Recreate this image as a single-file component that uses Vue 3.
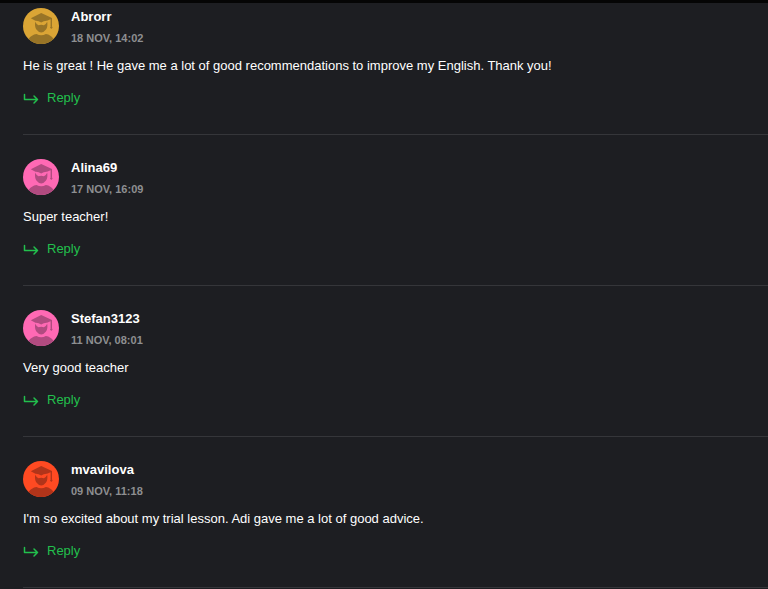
<script setup>
const reviews = [
  { name: 'Abrorr', date: '18 Nov, 14:02', tone: 'gold', text: 'He is great ! He gave me a lot of good recommendations to improve my English. Thank you!' },
  { name: 'Alina69', date: '17 Nov, 16:09', tone: 'pink', text: 'Super teacher!' },
  { name: 'Stefan3123', date: '11 Nov, 08:01', tone: 'pink', text: 'Very good teacher' },
  { name: 'mvavilova', date: '09 Nov, 11:18', tone: 'red', text: "I'm so excited about my trial lesson. Adi gave me a lot of good advice." },
]
</script>

<template>
  <main class="reviews">
    <article v-for="review in reviews" :key="review.name" class="review">
      <header class="author">
        <svg class="avatar" :class="review.tone" viewBox="0 0 36 36" aria-hidden="true">
          <circle class="disc" cx="18" cy="18" r="18" />
          <g class="figure">
            <path d="M18.200 5 29 10v8h-1.400v-6.800L24 12.800Q21 12.600 18.200 14.600 15.400 12.600 12.400 12.800L7.800 10.200Z" />
            <path d="M28.300 17.200 29.600 19.500 28.300 21 27 19.500Z" />
            <path d="M12.200 13.800Q13.500 16.600 15.500 17.200q2.700-.900 5.400 0 2-.600 3.300-3.400.800 5-1.200 7.800-2 2.800-4.800 2.800t-4.800-2.800Q11.400 18.800 12.200 13.800Z" />
            <path d="M5.500 31Q8.500 26.800 13.500 26q4.700 2.400 9.400 0 5 .800 7.600 5A18 18 0 0 1 5.500 31Z" />
          </g>
        </svg>
        <div class="meta">
          <h2 class="name">{{ review.name }}</h2>
          <time class="date">{{ review.date }}</time>
        </div>
      </header>
      <p class="text">{{ review.text }}</p>
      <button class="reply" type="button">
        <svg class="arrow" viewBox="0 0 16 12" aria-hidden="true">
          <path d="M1.500 1.500v5H14.500M11 3 14.500 6.500 11 10" />
        </svg>
        Reply
      </button>
    </article>
  </main>
</template>

<style>
body {
  margin: 0;
  background: #1d1e22;
}
</style>

<style scoped>
.reviews {
  padding: 5px 0 0 23px;
  border-top: 3px solid #050505;
  background: #1d1e22;
  color: #fff;
  font-family: "Liberation Sans", Arial, sans-serif;
  font-size: 13px;
}
.review {
  display: flex;
  flex-direction: column;
  align-items: flex-start;
  padding-bottom: 26px;
  border-bottom: 1px solid #35363a;
}
.review + .review {
  padding-top: 24px;
}
.author {
  display: flex;
  gap: 12px;
}
.avatar {
  width: 36px;
  height: 36px;
}
.gold .disc { fill: #dba535; }
.gold .figure { fill: #987427; }
.pink .disc { fill: #ff69b4; }
.pink .figure { fill: #b14b80; }
.red .disc { fill: #ff4a22; }
.red .figure { fill: #b1341a; }
.meta {
  display: flex;
  flex-direction: column;
  gap: 4px;
}
.name {
  margin: 0;
  font-size: 13px;
  font-weight: 700;
  line-height: 18px;
}
.date {
  color: #8e8f91;
  font-size: 11px;
  font-weight: 700;
  line-height: 16px;
  text-transform: uppercase;
}
.text {
  margin: 10px 0 12px;
  line-height: 20px;
}
.reply {
  display: flex;
  align-items: center;
  gap: 8px;
  padding: 0;
  border: 0;
  background: none;
  color: #22c04d;
  font: inherit;
  line-height: 20px;
  cursor: pointer;
}
.arrow {
  width: 16px;
  height: 12px;
  margin-top: 2px;
  fill: none;
  stroke: currentColor;
  stroke-width: 1.5;
  stroke-linecap: round;
  stroke-linejoin: round;
}
</style>
